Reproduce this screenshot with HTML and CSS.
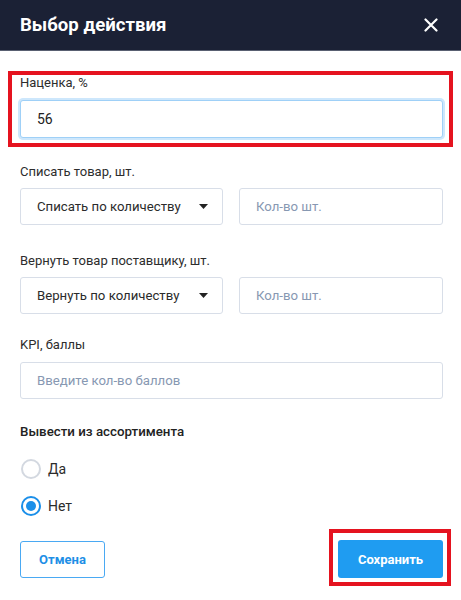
FILE: index.html
```html
<!DOCTYPE html>
<html lang="ru">
<head>
<meta charset="utf-8">
<title>Выбор действия</title>
<link rel="stylesheet" href="styles.css">
</head>
<body>
<div class="dialog">
  <header class="dialog-header">
    <h1 class="dialog-title">Выбор действия</h1>
    <button class="close-btn" aria-label="Закрыть">
      <svg width="14" height="14" viewBox="0 0 14 14"><path d="M1.5 1.5 L12.5 12.5 M12.5 1.5 L1.5 12.5" stroke="#fff" stroke-width="2.2" stroke-linecap="round"/></svg>
    </button>
  </header>

  <div class="highlight markup">
    <label class="field-label">Наценка, %</label>
    <input class="text-input focused" type="text" value="56">
  </div>

  <div class="field field-writeoff">
    <label class="field-label">Списать товар, шт.</label>
    <div class="pair">
      <div class="select">
        <span>Списать по количеству</span>
        <svg class="caret" width="9" height="5" viewBox="0 0 9 5"><path d="M0 0 H9 L4.5 5 Z" fill="#222"/></svg>
      </div>
      <input class="text-input" type="text" placeholder="Кол-во шт.">
    </div>
  </div>

  <div class="field field-return">
    <label class="field-label">Вернуть товар поставщику, шт.</label>
    <div class="pair">
      <div class="select">
        <span>Вернуть по количеству</span>
        <svg class="caret" width="9" height="5" viewBox="0 0 9 5"><path d="M0 0 H9 L4.5 5 Z" fill="#222"/></svg>
      </div>
      <input class="text-input" type="text" placeholder="Кол-во шт.">
    </div>
  </div>

  <div class="field field-kpi">
    <label class="field-label">KPI, баллы</label>
    <input class="text-input" type="text" placeholder="Введите кол-во баллов">
  </div>

  <div class="field field-assort">
    <div class="group-title">Вывести из ассортимента</div>
    <div class="radio-row">
      <span class="radio"></span><span class="radio-text">Да</span>
    </div>
    <div class="radio-row second">
      <span class="radio checked"></span><span class="radio-text">Нет</span>
    </div>
  </div>

  <div class="footer">
    <button class="btn btn-outline">Отмена</button>
    <div class="highlight save-wrap">
      <button class="btn btn-primary">Сохранить</button>
    </div>
  </div>
</div>
</body>
</html>
```

FILE: styles.css
```css
* { box-sizing: border-box; }

html, body {
  margin: 0;
  padding: 0;
  background: #ffffff;
}

body {
  font-family: Roboto, "Noto Sans", "Liberation Sans", sans-serif;
  color: #2b2b2b;
}

.dialog {
  width: 461px;
  height: 600px;
  background: #fff;
}

.dialog-header {
  height: 51px;
  background: #1b2135;
  border-bottom: 1px solid #596071;
  display: flex;
  align-items: center;
  justify-content: space-between;
  padding: 0 23px 0 20px;
}

.dialog-title {
  margin: 0;
  font-size: 18.6px;
  font-weight: 700;
  color: #ffffff;
  line-height: 22px;
}

.close-btn {
  background: none;
  border: 0;
  padding: 0;
  width: 14px;
  height: 14px;
  display: flex;
  cursor: pointer;
}

.highlight {
  border: 4px solid #e5131f;
}

.markup {
  margin: 20px 8px 0 8px;
  padding: 0 6px 5px 8px;
}

.field-label {
  display: block;
  font-size: 13px;
  line-height: 16px;
  color: #2d2d2d;
  margin-bottom: 8px;
}

.markup .field-label { margin-bottom: 9px; }

.text-input {
  display: block;
  width: 100%;
  height: 37px;
  border: 1px solid #d8dee8;
  border-radius: 3px;
  padding: 0 16px;
  font-family: inherit;
  font-size: 13.2px;
  color: #222;
  background: #fff;
  outline: none;
}

.text-input::placeholder {
  color: #8798b2;
}

.text-input.focused {
  height: 38px;
  font-size: 14px;
  border-color: #9fd0f7;
  box-shadow: 0 0 0 2px #cde7fc;
}

.field {
  padding: 0 18px 0 20px;
}

.field-writeoff { margin-top: 17px; }
.field-return { margin-top: 28px; }
.field-kpi { margin-top: 23px; }
.field-kpi .field-label { margin-bottom: 9px; }
.field-assort { margin-top: 24px; }

.pair {
  display: grid;
  grid-template-columns: 203px 1fr;
  gap: 16px;
}

.select {
  height: 37px;
  border: 1px solid #d8dee8;
  border-radius: 3px;
  display: flex;
  align-items: center;
  justify-content: space-between;
  padding: 0 14px 0 16px;
  font-size: 13.2px;
  color: #2b2b2b;
}

.caret { display: block; }

.group-title {
  font-size: 13.3px;
  line-height: 18px;
  font-weight: 500;
  color: #222;
  margin-bottom: 18px;
}

.radio-row {
  display: flex;
  align-items: center;
  height: 20px;
  padding-left: 1px;
}

.radio-row.second { margin-top: 17px; }

.radio {
  width: 20px;
  height: 20px;
  border-radius: 50%;
  border: 2px solid #d3d8e0;
  background: #fff;
  position: relative;
  flex: none;
}

.radio.checked {
  border-color: #1b8fe9;
}

.radio.checked::after {
  content: "";
  position: absolute;
  left: 3px;
  top: 3px;
  width: 10px;
  height: 10px;
  border-radius: 50%;
  background: #1b8fe9;
}

.radio-text {
  margin-left: 7px;
  font-size: 14px;
  color: #2b2b2b;
}

.footer {
  display: flex;
  justify-content: space-between;
  align-items: flex-start;
  margin: 13px 10px 0 20px;
}

.btn {
  font-family: inherit;
  height: 37px;
  border-radius: 3px;
  font-weight: 700;
  cursor: pointer;
}

.btn-outline {
  margin-top: 12px;
  width: 85px;
  background: #fff;
  border: 1px solid #4aa9f3;
  color: #1e8fe6;
  font-size: 13px;
}

.save-wrap {
  padding: 7px 4px 4px 5px;
}

.btn-primary {
  display: block;
  width: 105px;
  height: 38px;
  border: 0;
  background: #1f9cf1;
  color: #fff;
  font-size: 13px;
}
```
